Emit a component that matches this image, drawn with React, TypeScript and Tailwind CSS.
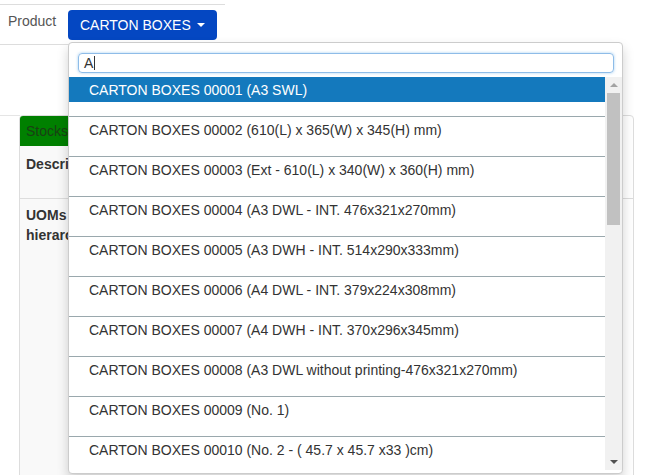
import React from "react";

const items = [
  "CARTON BOXES 00001 (A3 SWL)",
  "CARTON BOXES 00002 (610(L) x 365(W) x 345(H) mm)",
  "CARTON BOXES 00003 (Ext - 610(L) x 340(W) x 360(H) mm)",
  "CARTON BOXES 00004 (A3 DWL - INT. 476x321x270mm)",
  "CARTON BOXES 00005 (A3 DWH - INT. 514x290x333mm)",
  "CARTON BOXES 00006 (A4 DWL - INT. 379x224x308mm)",
  "CARTON BOXES 00007 (A4 DWH - INT. 370x296x345mm)",
  "CARTON BOXES 00008 (A3 DWL without printing-476x321x270mm)",
  "CARTON BOXES 00009 (No. 1)",
  "CARTON BOXES 00010 (No. 2 - ( 45.7 x 45.7 x33 )cm)",
];

const App = () => {
  return (
    <div
      className="relative w-[663px] h-[475px] overflow-hidden bg-white text-[14px] text-[#333]"
      style={{ fontFamily: '"Liberation Sans", Arial, sans-serif' }}
    >
      {/* page behind the dropdown */}
      <div className="pt-[4px]">
        <div className="w-[225px] border-t border-[#ddd]">
          <div className="flex items-start h-[39px] pt-[5px]">
            <span className="pl-[8px] w-[68px] pt-[1px] text-[#555] leading-[20px]">Product</span>
            <button className="flex items-center gap-[6px] h-[30px] px-[12px] bg-[#0447c2] text-white rounded-[4px] leading-[20px]">
              CARTON BOXES
              <span className="w-0 h-0 border-x-[4px] border-x-transparent border-t-[4px] border-t-white" />
            </button>
          </div>
        </div>
        <div className="w-[225px] border-t border-[#ddd] h-[71px]" />
        <div className="border-t border-[#e5e5e5] w-[20px]" />
        <div className="ml-[19px] w-[615px] -mt-[1px] border border-[#ddd] rounded-t-[4px] h-[400px]">
          <div className="h-[30px] w-[110px] bg-[#008000] rounded-tl-[3px] flex items-center pl-[6px] text-[#1a3f14]">Stocks</div>
          <div className="flex border-b border-[#ddd] h-[53px]">
            <div className="w-[120px] bg-[#f9f9f9] px-[6px] py-[8px] font-bold leading-[20px] whitespace-nowrap overflow-hidden">Description</div>
          </div>
          <div className="flex h-[320px]">
            <div className="w-[120px] bg-[#f9f9f9] px-[6px] py-[6px] font-bold leading-[20px] overflow-hidden">
              UOMs
              <br />
              hierarchy
            </div>
          </div>
        </div>
      </div>

      {/* open dropdown */}
      <div className="absolute left-[68px] top-[42px] w-[555px] h-[432px] bg-white border border-[#ccc] rounded-[4px] shadow-[0_6px_12px_rgba(0,0,0,0.18)] flex flex-col">
        <div className="pt-[10px] pl-[9px] pr-[8px] pb-[4px]">
          <div className="h-[20px] border border-[#8ebce8] rounded-[4px] shadow-[0_0_3px_rgba(102,175,233,0.6)] flex items-center pl-[5px] leading-[18px] text-[#333]">
            A<span className="w-px h-[14px] bg-[#333] ml-px" />
          </div>
        </div>
        <div className="flex flex-1 min-h-0">
          <div className="flex-1 overflow-hidden">
            {items.map((t, i) => (
              <div key={t} className="h-[40px] border-b border-[#9aa8ad]">
                <div
                  className={
                    "h-[25px] pl-[20px] pt-[2px] flex items-center whitespace-nowrap " +
                    (i === 0 ? "bg-[#1479bd] text-white" : "")
                  }
                >
                  {t}
                </div>
              </div>
            ))}
          </div>
          <div className="w-[17px] mb-[3px] bg-[#f1f1f1] flex flex-col items-center">
            <div className="h-[16px] flex items-center justify-center">
              <span className="w-0 h-0 border-x-[4px] border-x-transparent border-b-[4px] border-b-[#a3a3a3]" />
            </div>
            <div className="w-[13px] h-[132px] bg-[#c1c1c1]" />
            <div className="flex-1" />
            <div className="h-[16px] flex items-center justify-center">
              <span className="w-0 h-0 border-x-[4px] border-x-transparent border-t-[4px] border-t-[#505050]" />
            </div>
          </div>
        </div>
      </div>
    </div>
  );
};

export default App;
